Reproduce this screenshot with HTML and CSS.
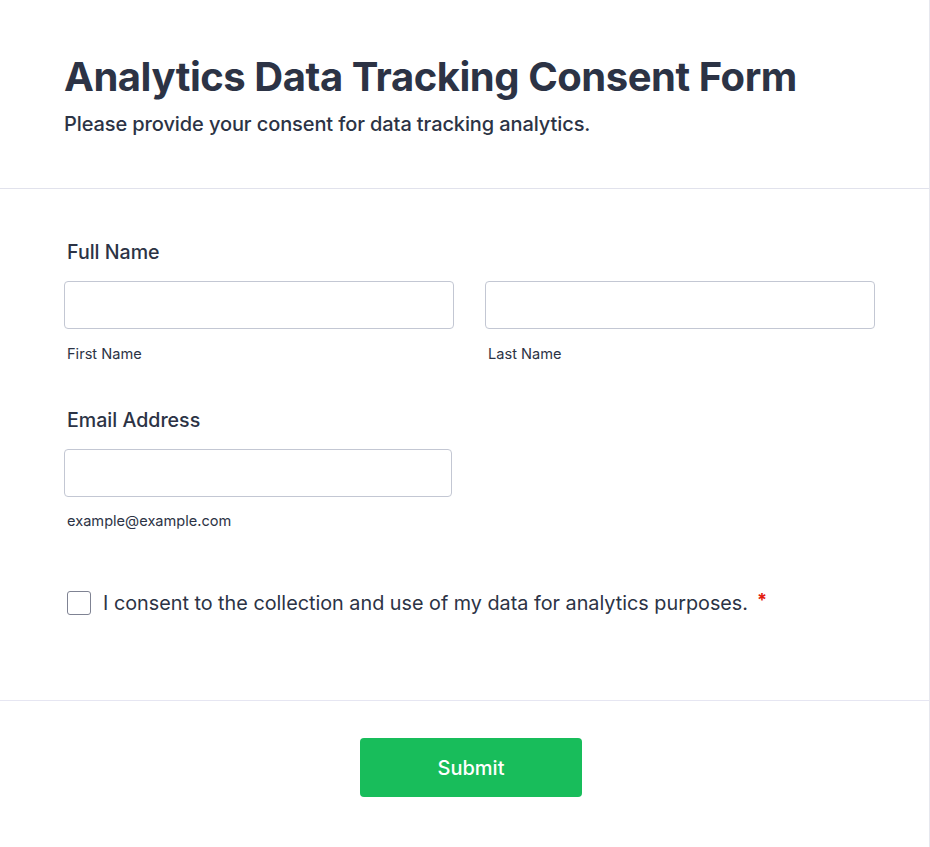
FILE: index.html
```html
<!DOCTYPE html>
<html lang="en">
<head>
<meta charset="utf-8">
<title>Analytics Data Tracking Consent Form</title>
<link rel="stylesheet" href="styles.css">
</head>
<body>
<div class="form">
  <header class="header">
    <h1 class="title">Analytics Data Tracking Consent Form</h1>
    <p class="subtitle">Please provide your consent for data tracking analytics.</p>
  </header>
  <section class="body">
    <div class="field">
      <label class="label">Full Name</label>
      <div class="name-row">
        <div class="sub-field">
          <input class="input" type="text">
          <span class="sublabel">First Name</span>
        </div>
        <div class="sub-field">
          <input class="input" type="text">
          <span class="sublabel">Last Name</span>
        </div>
      </div>
    </div>
    <div class="field field-email">
      <label class="label">Email Address</label>
      <div class="sub-field email">
        <input class="input" type="email">
        <span class="sublabel">example@example.com</span>
      </div>
    </div>
    <label class="consent">
      <span class="checkbox"></span>
      <span class="consent-text">I consent to the collection and use of my data for analytics purposes.</span>
      <span class="required">*</span>
    </label>
  </section>
  <footer class="footer">
    <button class="submit" type="button">Submit</button>
  </footer>
</div>
</body>
</html>
```
FILE: styles.css
```css
* { box-sizing: border-box; }
html, body { margin: 0; padding: 0; background: #ffffff; }
body {
  font-family: Inter, "Noto Sans", "Liberation Sans", sans-serif;
  color: #2c3345;
}
.form {
  width: 930px;
  min-height: 847px;
  border-right: 1px solid #e6e7ee;
}
.header {
  padding: 53px 64px 52px;
  border-bottom: 1px solid #e1e2ec;
}
.title {
  margin: 0;
  font-size: 40px;
  line-height: 48px;
  font-weight: 700;
  color: #2c3345;
  letter-spacing: -0.46px;
}
.subtitle {
  margin: 11px 0 0;
  font-size: 20px;
  line-height: 24px;
  font-weight: 500;
  color: #2c3345;
  letter-spacing: -0.1px;
}
.body {
  padding: 51px 54px 85px 64px;
  border-bottom: 1px solid #e6e6f2;
}
.field { display: flex; flex-direction: column; }
.field-email { margin-top: 45px; }
.label {
  padding-left: 3px;
  font-size: 19.6px;
  line-height: 24px;
  font-weight: 500;
  color: #2c3345;
}
.name-row {
  display: flex;
  gap: 31px;
  margin-top: 17px;
}
.sub-field { display: flex; flex-direction: column; width: 390px; flex: none; }
.sub-field.email { width: 388px; margin-top: 17px; }
.input {
  display: block;
  width: 100%;
  height: 48px;
  margin: 0;
  border: 1px solid #c3c7d3;
  border-radius: 4px;
  background: #fff;
  font: inherit;
}
.sublabel {
  margin-top: 16px;
  padding-left: 3px;
  font-size: 14.6px;
  line-height: 18px;
  color: #2c3345;
}
.email .sublabel { margin-top: 15px; }
.consent {
  display: flex;
  align-items: center;
  margin-top: 61px;
  padding-left: 3px;
}
.checkbox {
  width: 24px;
  height: 24px;
  border: 1px solid #7f8393;
  border-radius: 3px;
  background: #fff;
  flex: none;
}
.consent-text {
  margin-left: 12px;
  font-size: 19.8px;
  line-height: 24px;
  color: #2c3345;
}
.required {
  align-self: flex-start;
  margin-left: 9px;
  margin-top: -3px;
  font-size: 18px;
  line-height: 24px;
  font-weight: 700;
  color: #e31b0c;
}
.footer {
  display: flex;
  justify-content: center;
  padding: 37px 0 49px;
}
.submit {
  width: 222px;
  height: 59px;
  margin-left: 13px;
  border: none;
  border-radius: 4px;
  background: #18bd5b;
  color: #fff;
  font-family: inherit;
  font-size: 20px;
  font-weight: 500;
}
```
